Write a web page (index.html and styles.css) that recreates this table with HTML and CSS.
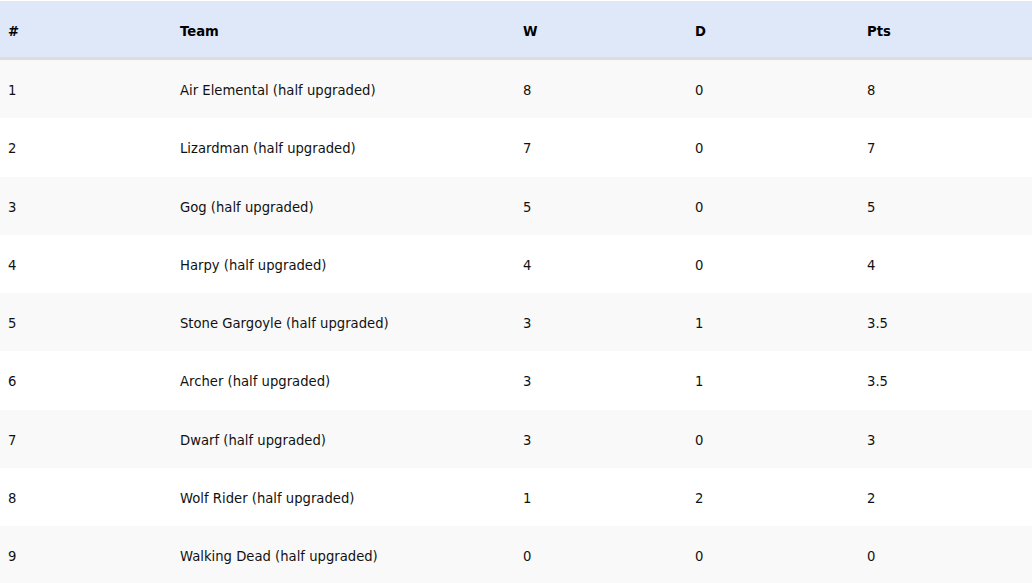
FILE: index.html
```html
<!DOCTYPE html>
<html>
<head>
<meta charset="utf-8">
<link rel="stylesheet" href="styles.css">
</head>
<body>
<table class="standings">
  <thead>
    <tr><th class="c1">#</th><th class="c2">Team</th><th class="c1">W</th><th class="c1">D</th><th class="c5">Pts</th></tr>
  </thead>
  <tbody>
    <tr><td>1</td><td>Air Elemental (half upgraded)</td><td>8</td><td>0</td><td>8</td></tr>
    <tr><td>2</td><td>Lizardman (half upgraded)</td><td>7</td><td>0</td><td>7</td></tr>
    <tr><td>3</td><td>Gog (half upgraded)</td><td>5</td><td>0</td><td>5</td></tr>
    <tr><td>4</td><td>Harpy (half upgraded)</td><td>4</td><td>0</td><td>4</td></tr>
    <tr><td>5</td><td>Stone Gargoyle (half upgraded)</td><td>3</td><td>1</td><td>3.5</td></tr>
    <tr><td>6</td><td>Archer (half upgraded)</td><td>3</td><td>1</td><td>3.5</td></tr>
    <tr><td>7</td><td>Dwarf (half upgraded)</td><td>3</td><td>0</td><td>3</td></tr>
    <tr><td>8</td><td>Wolf Rider (half upgraded)</td><td>1</td><td>2</td><td>2</td></tr>
    <tr><td>9</td><td>Walking Dead (half upgraded)</td><td>0</td><td>0</td><td>0</td></tr>
  </tbody>
</table>
</body>
</html>
```
FILE: styles.css
```css
html, body {
  margin: 0;
  padding: 0;
  background: #ffffff;
}
body {
  font-family: "DejaVu Sans", sans-serif;
  font-size: 13.2px;
  color: #111111;
}
.standings {
  width: 1032px;
  border-collapse: collapse;
  table-layout: fixed;
  margin-top: 1px;
}
.standings th,
.standings td {
  text-align: left;
}
.standings th {
  background: #dfe8f8;
  font-weight: bold;
  padding: 22px 8px 16px;
  line-height: 18px;
  border-bottom: 3px solid #dcdcdc;
  color: #000;
}
.standings td {
  padding: 22px 8px 18px;
  line-height: 18.25px;
}
.standings tbody tr:nth-child(odd) td {
  background: #f9f9f9;
}
.c1 { width: 156px; }
.c2 { width: 327px; }
.c5 { width: 157px; }
```
